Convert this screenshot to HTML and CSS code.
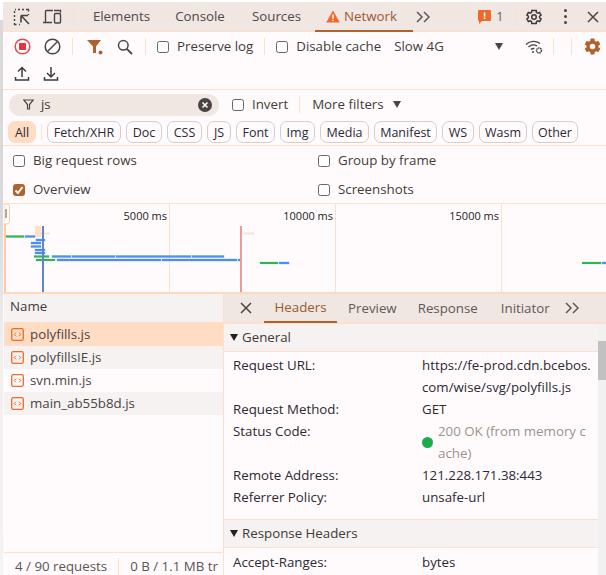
FILE: index.html
```html
<!DOCTYPE html>
<html lang="en">
<head>
<meta charset="utf-8">
<title>Network</title>
<link rel="stylesheet" href="styles.css">
</head>
<body>
<div class="edge"></div>
<div class="app">
  <header class="tabbar">
    <span class="ico first"><svg width="18" height="18" viewBox="0 0 18 18" fill="none" stroke="#4a4542" stroke-width="1.4"><path d="M2 1.500h1M5 1.500h2M9 1.500h2M13 1.500h2.500v2M15.500 6v1M1.500 3v2M1.500 7v2M1.500 11v2M1.500 15v1.500h2M6 16.500h1"/><path d="M8 7.500h7M8 7.500v7M8.500 8l7.500 8" stroke-width="1.600"/></svg></span>
    <span class="ico dev"><svg width="20" height="18" viewBox="0 0 20 18" fill="none" stroke="#4a4542" stroke-width="1.400"><path d="M11 2.500H4.500A1.200 1.200 0 0 0 3.500 3.500V14M1 14.500h9"/><rect x="12.500" y="5.500" width="6" height="9.500" rx="1"/><path d="M12 2.500h6.500v2"/></svg></span>
    <span class="sep s-tab"></span>
    <span class="tab t-el">Elements</span>
    <span class="tab t-co">Console</span>
    <span class="tab t-so">Sources</span>
    <span class="tab t-ne active"><svg width="14" height="13" viewBox="0 0 14 13"><path d="M7 .5 13.800 12.500H.2z" fill="#ee6a2a"/><path d="M6.300 4.500h1.400v4.300H6.300zM6.300 9.700h1.400v1.400H6.300z" fill="#fff"/></svg>Network</span>
    <span class="chev"><svg width="15" height="12" viewBox="0 0 15 12" fill="none" stroke="#5f5a57" stroke-width="1.500"><path d="M1 1l5 5-5 5M8 1l5 5-5 5"/></svg></span>
    <span class="issue"><svg width="13" height="14" viewBox="0 0 13 14"><path d="M1 0h11a1 1 0 0 1 1 1v9a1 1 0 0 1-1 1H4l-3 3V11a1 1 0 0 1-1-1V1a1 1 0 0 1 1-1z" fill="#ee6a2a"/><path d="M5.800 2.500h1.500v4.200H5.800zM5.800 7.600h1.500v1.500H5.800z" fill="#fff"/></svg><span>1</span></span>
    <span class="sep s-iss"></span>
    <span class="ico gear"><svg width="18" height="18" viewBox="0 0 24 24" fill="none" stroke="#3f3b39" stroke-width="2"><path d="M19.400 13a7.600 7.600 0 0 0 0-2l2-1.600-2-3.400-2.400 1a7.600 7.600 0 0 0-1.700-1L15 3.400h-6L8.600 6a7.600 7.600 0 0 0-1.700 1l-2.400-1-2 3.400 2 1.600a7.600 7.600 0 0 0 0 2l-2 1.600 2 3.400 2.400-1a7.600 7.600 0 0 0 1.700 1l.4 2.600h6l.4-2.600a7.600 7.600 0 0 0 1.700-1l2.400 1 2-3.400z"/><circle cx="12" cy="12" r="3"/></svg></span>
    <span class="dots"><i></i><i></i><i></i></span>
    <span class="ico close"><svg width="12" height="12" viewBox="0 0 12 12" fill="none" stroke="#4a4542" stroke-width="1.500"><path d="M1 1l10 10M11 1 1 11"/></svg></span>
  </header>

  <section class="toolbar">
    <div class="tool-row r1">
      <span class="ico rec"><svg width="17" height="17" viewBox="0 0 17 17"><circle cx="8.500" cy="8.500" r="7.300" fill="none" stroke="#e5484d" stroke-width="1.500"/><rect x="5" y="5" width="7" height="7" rx="1" fill="#e5343a"/></svg></span>
      <span class="ico clr"><svg width="17" height="17" viewBox="0 0 17 17" fill="none" stroke="#4a4542" stroke-width="1.500"><circle cx="8.500" cy="8.500" r="7.300"/><path d="M3.500 13.500l10-10"/></svg></span>
      <span class="sep s1"></span>
      <span class="ico fil"><svg width="16" height="16" viewBox="0 0 16 16"><path d="M0 1h14L9 7.500V14H6V7.500z" fill="#b0622c"/><circle cx="13.500" cy="13.500" r="2" fill="#b0622c"/></svg></span>
      <span class="ico sea"><svg width="16" height="16" viewBox="0 0 16 16" fill="none" stroke="#4a4542" stroke-width="1.500"><circle cx="6.300" cy="6.300" r="4.800"/><path d="M9.800 9.800l5.200 5.200" stroke-width="1.800"/></svg></span>
      <span class="sep s2"></span>
      <label class="check c-log"><span class="box"></span>Preserve log</label>
      <span class="sep s3"></span>
      <label class="check c-cache"><span class="box"></span>Disable cache</label>
      <span class="throttle">Slow 4G</span>
      <span class="caret c-thr"></span>
      <span class="ico wifi"><svg width="18" height="16" viewBox="0 0 18 16" fill="none" stroke="#4a4542" stroke-width="1.400"><path d="M1 5.500C5 1.500 11 1.500 15 4.500M3.500 8C6 5.700 9.500 5.500 12 6.800M6 10.500c1-.9 2.200-1.200 3.400-1"/><circle cx="8" cy="13" r="1" fill="#4a4542" stroke="none"/><circle cx="14" cy="11.500" r="2.500" stroke-width="1.500" stroke-dasharray="1.500 .6"/></svg></span>
      <span class="sep s4"></span>
      <span class="sep s5"></span>
      <span class="ico ogear"><svg width="19" height="19" viewBox="0 0 24 24"><path fill="#b0622c" d="M19.430 12.980c.04-.32.07-.64.07-.98s-.03-.66-.07-.98l2.110-1.650c.19-.15.240-.42.120-.640l-2-3.460c-.12-.22-.39-.3-.61-.22l-2.490 1c-.52-.4-1.080-.73-1.690-.98l-.38-2.650C14.460 2.180 14.250 2 14 2h-4c-.25 0-.46.180-.49.420l-.38 2.650c-.61.25-1.170.59-1.690.98l-2.490-1c-.23-.09-.49 0-.61.220l-2 3.460c-.13.220-.07.490.12.640l2.110 1.650c-.04.320-.07.650-.07.980s.03.660.07.980l-2.110 1.650c-.19.150-.24.420-.12.640l2 3.460c.12.220.39.300.61.220l2.490-1c.52.400 1.080.730 1.690.980l.38 2.650c.03.240.24.420.49.420h4c.25 0 .46-.18.49-.42l.38-2.650c.61-.25 1.170-.59 1.690-.98l2.490 1c.23.090.49 0 .61-.22l2-3.460c.12-.22.07-.49-.12-.64zM12 15.500a3.500 3.500 0 1 1 0-7 3.500 3.500 0 0 1 0 7z"/></svg></span>
    </div>
    <div class="tool-row r2">
      <span class="ico up"><svg width="16" height="16" viewBox="0 0 16 16" fill="none" stroke="#3f3b39" stroke-width="1.500"><path d="M8 11V2M4 5.500 8 1.500l4 4M1.500 11v3h13v-3"/></svg></span>
      <span class="ico down"><svg width="16" height="16" viewBox="0 0 16 16" fill="none" stroke="#3f3b39" stroke-width="1.500"><path d="M8 1v9.500M4 7l4 4 4-4M1.500 11v3h13v-3"/></svg></span>
    </div>
  </section>

  <section class="filters">
    <div class="pill">
      <svg width="11" height="11" viewBox="0 0 11 11" fill="none" stroke="#4a4542" stroke-width="1.200"><path d="M.7 1h9.600L6.500 5.500v4.500h-2V5.500z"/></svg>
      <span class="pill-text">js</span>
      <svg class="pill-x" width="14" height="14" viewBox="0 0 14 14"><circle cx="7" cy="7" r="7" fill="#4a4542"/><path d="M4.500 4.500l5 5M9.500 4.500l-5 5" stroke="#fff" stroke-width="1.600"/></svg>
    </div>
    <label class="check c-inv"><span class="box"></span>Invert</label>
    <span class="sep s6"></span>
    <span class="more">More filters</span>
    <span class="caret c-more"></span>
  </section>

  <nav class="chips">
    <span class="chip on">All</span>
    <span class="sep s7"></span>
    <span class="chip w74">Fetch/XHR</span>
    <span class="chip w36">Doc</span>
    <span class="chip w35">CSS</span>
    <span class="chip w24">JS</span>
    <span class="chip w38">Font</span>
    <span class="chip w35">Img</span>
    <span class="chip w49">Media</span>
    <span class="chip w63">Manifest</span>
    <span class="chip w32">WS</span>
    <span class="chip w48">Wasm</span>
    <span class="chip w46">Other</span>
  </nav>

  <section class="settings">
    <label class="check"><span class="box"></span>Big request rows</label>
    <label class="check"><span class="box"></span>Group by frame</label>
    <label class="check"><span class="box checked"><svg width="12" height="12" viewBox="0 0 12 12" fill="none" stroke="#fff" stroke-width="2"><path d="M2.500 6.500l2.500 2.500 4.500-6"/></svg></span>Overview</label>
    <label class="check"><span class="box"></span>Screenshots</label>
  </section>

  <section class="overview">
    <svg width="602" height="88" viewBox="4 204 602 88">
      <path d="M169.500 204v88M335.500 204v88M501.500 204v88" stroke="#fde0cc" fill="none"/>
      <rect x="4" y="204" width="2" height="88" fill="#ffc9a6"/>
      <path d="M4 204h3a2.500 2.500 0 0 1 2.500 2.500v15a2.500 2.500 0 0 1-2.500 2.500H4z" fill="#fff" stroke="#ffc9a6"/>
      <rect x="5.500" y="209" width="1" height="9" fill="#555"/>
      <g class="ms">
        <text x="167" y="219.500" text-anchor="end">5000 ms</text>
        <text x="333" y="219.500" text-anchor="end">10000 ms</text>
        <text x="499" y="219.500" text-anchor="end">15000 ms</text>
      </g>
      <rect x="35" y="226" width="6" height="11" fill="#ffdfcc"/>
      <rect x="41" y="232.500" width="9" height="2" fill="#f8e3d9"/>
      <rect x="243" y="232.500" width="11" height="2" fill="#f8e3d9"/>
      <g class="bars-g">
        <rect x="6" y="235.500" width="18" height="2"/>
        <rect x="34" y="255.500" width="15" height="2"/>
        <rect x="36" y="259" width="19" height="2"/>
        <rect x="260" y="262" width="18" height="2"/>
        <rect x="582" y="262" width="19" height="2"/>
      </g>
      <g class="bars-b">
        <rect x="25" y="235.500" width="10" height="2"/>
        <rect x="36" y="239" width="9" height="2"/>
        <rect x="31" y="242" width="10" height="2"/>
        <rect x="31" y="245.500" width="10" height="2"/>
        <rect x="35" y="249" width="10" height="2"/>
        <rect x="35" y="252" width="10" height="2"/>
        <rect x="52" y="255.500" width="19" height="2"/>
        <rect x="72" y="255.500" width="43" height="2"/>
        <rect x="116" y="255.500" width="75" height="2"/>
        <rect x="192" y="255.500" width="32" height="2"/>
        <rect x="57" y="259" width="104" height="2"/>
        <rect x="162" y="259" width="75" height="2"/>
        <rect x="238" y="259" width="3" height="2"/>
        <rect x="279" y="262" width="10" height="2"/>
        <rect x="602" y="262" width="4" height="2"/>
      </g>
      <rect x="42" y="226" width="2" height="66" fill="#5f86c8"/>
      <rect x="240" y="226" width="2" height="66" fill="#ef9a9a"/>
    </svg>
  </section>

  <main class="split">
    <aside class="list">
      <div class="list-head">Name</div>
      <div class="rows">
        <div class="row sel"><svg class="js" width="13" height="13" viewBox="0 0 13 13" fill="none" stroke="#ee6a2a"><rect x=".7" y=".7" width="11.600" height="11.600" rx="1.500" stroke-width="1.300"/><path d="M5 4.700 3.300 6.500 5 8.300M8 4.700l1.700 1.800L8 8.300"/></svg><span class="name">polyfills.js</span></div>
        <div class="row alt"><svg class="js" width="13" height="13" viewBox="0 0 13 13" fill="none" stroke="#ee6a2a"><rect x=".7" y=".7" width="11.600" height="11.600" rx="1.500" stroke-width="1.300"/><path d="M5 4.700 3.300 6.500 5 8.300M8 4.700l1.700 1.800L8 8.300"/></svg><span class="name">polyfillsIE.js</span></div>
        <div class="row"><svg class="js" width="13" height="13" viewBox="0 0 13 13" fill="none" stroke="#ee6a2a"><rect x=".7" y=".7" width="11.600" height="11.600" rx="1.500" stroke-width="1.300"/><path d="M5 4.700 3.300 6.500 5 8.300M8 4.700l1.700 1.800L8 8.300"/></svg><span class="name">svn.min.js</span></div>
        <div class="row alt"><svg class="js" width="13" height="13" viewBox="0 0 13 13" fill="none" stroke="#ee6a2a"><rect x=".7" y=".7" width="11.600" height="11.600" rx="1.500" stroke-width="1.300"/><path d="M5 4.700 3.300 6.500 5 8.300M8 4.700l1.700 1.800L8 8.300"/></svg><span class="name">main_ab55b8d.js</span></div>
      </div>
      <footer class="status"><span class="st-a">4 / 90 requests</span><span class="st-b">0 B / 1.1 MB tr</span></footer>
    </aside>
    <section class="detail">
      <div class="dtabs">
        <span class="dx"><svg width="12" height="12" viewBox="0 0 12 12" fill="none" stroke="#4a4542" stroke-width="1.500"><path d="M1 1l10 10M11 1 1 11"/></svg></span>
        <span class="dtab d-h active">Headers</span>
        <span class="dtab d-p">Preview</span>
        <span class="dtab d-r">Response</span>
        <span class="dtab d-i">Initiator</span>
        <svg class="dchev" width="15" height="12" viewBox="0 0 15 12" fill="none" stroke="#5f5a57" stroke-width="1.500"><path d="M1 1l5 5-5 5M8 1l5 5-5 5"/></svg>
      </div>
      <div class="dbody">
        <div class="dcontent">
          <div class="sect"><span class="tri"></span>General</div>
          <div class="kvs">
            <div class="kv"><span class="k">Request URL:</span><span class="v">https://fe-prod.cdn.bcebos.<br>com/wise/svg/polyfills.js</span></div>
            <div class="kv"><span class="k">Request Method:</span><span class="v">GET</span></div>
            <div class="kv"><span class="k">Status Code:</span><span class="v stat"><i class="dot"></i><span class="muted">200 OK (from memory c<br>ache)</span></span></div>
            <div class="kv"><span class="k">Remote Address:</span><span class="v">121.228.171.38:443</span></div>
            <div class="kv"><span class="k">Referrer Policy:</span><span class="v">unsafe-url</span></div>
          </div>
          <div class="sect"><span class="tri"></span>Response Headers</div>
          <div class="kvs tail">
            <div class="kv"><span class="k">Accept-Ranges:</span><span class="v">bytes</span></div>
          </div>
        </div>
        <div class="scroll"><div class="thumb"></div></div>
      </div>
    </section>
  </main>
</div>
</body>
</html>
```

FILE: styles.css
```css
* { box-sizing: border-box; }
html, body { margin: 0; padding: 0; }
body {
  width: 606px;
  height: 575px;
  overflow: hidden;
  background: #fff;
  display: flex;
  font-family: "Open Sans", "Noto Sans", sans-serif;
  font-size: 13.3px;
  line-height: 17px;
  color: #3f3b39;
}
.edge {
  width: 3px;
  flex: none;
  margin-top: 20px;
  background: linear-gradient(#d9d9d9 0, #d9d9d9 35%, #f0f0f0 60%, #f3f3f3 100%);
}
.app {
  width: 603px;
  height: 575px;
  padding-top: 2px;
  display: flex;
  flex-direction: column;
  overflow: hidden;
}
.app > * { background-color: #fffbfd; }
svg { display: block; flex: none; }
.ico { display: flex; align-items: center; justify-content: center; flex: none; }
.sep { width: 1px; height: 17px; background: #fde0cc; flex: none; }

/* top tabs */
.tabbar {
  height: 30px;
  flex: none;
  display: flex;
  align-items: center;
  background-color: #f0e6e2;
  border-bottom: 1px solid #fde0cc;
}
.first { margin-left: 10px; width: 18px; }
.dev { margin-left: 11px; width: 20px; }
.s-tab { margin-left: 11px; }
.tab {
  height: 30px;
  display: flex;
  align-items: center;
  justify-content: center;
  gap: 4px;
  color: #4f4a47;
  flex: none;
}
.t-el { width: 81px; margin-left: 7px; }
.t-co { width: 76px; margin-left: 0; }
.t-so { width: 73px; margin-left: 2px; }
.t-ne { width: 98px; margin-left: 2px; color: #9a5a30; border-bottom: 2px solid #b0622c; padding: 2px 5px 0 0; }
.chev { margin-left: 3px; flex: none; }
.issue { display: flex; align-items: center; gap: 5px; margin-left: 47px; width: 37px; color: #6b6663; flex: none; }
.s-iss { margin-left: 0; }
.gear { width: 18px; margin-left: 9px; }
.dots { display: flex; flex-direction: column; gap: 3px; margin-left: 21px; flex: none; }
.dots i { display: block; width: 3px; height: 3px; border-radius: 50%; background: #4a4542; }
.close { margin-left: 20px; }

/* toolbar */
.toolbar { flex: none; border-bottom: 1px solid #fde0cc; }
.tool-row { display: flex; align-items: center; }
.r1 { height: 29px; }
.r2 { height: 28px; padding-bottom: 2px; }
.rec { margin-left: 11px; width: 17px; }
.clr { margin-left: 13px; width: 17px; }
.s1 { margin-left: 11px; }
.fil { margin-left: 14px; width: 16px; }
.sea { margin-left: 14px; width: 16px; }
.s2 { margin-left: 12px; }
.check { display: flex; align-items: center; gap: 8px; white-space: nowrap; flex: none; }
.box {
  width: 12px;
  height: 12px;
  border: 1px solid #6b6663;
  border-radius: 2.500px;
  background: #fff;
  flex: none;
  display: block;
}
.box.checked { background: #b0622c; border-color: #b0622c; }
.box.checked svg { margin: -1px; }
.c-log { margin-left: 11px; }
.s3 { margin-left: 11px; }
.c-cache { margin-left: 11px; }
.throttle { margin-left: 13px; flex: none; width: 101px; }
.caret {
  width: 0;
  height: 0;
  border-left: 4.500px solid transparent;
  border-right: 4.500px solid transparent;
  border-top: 7px solid #4a4542;
  flex: none;
}
.wifi { margin-left: 22px; width: 18px; }
.s4 { margin-left: 10px; }
.s5 { margin-left: 17px; }
.ogear { margin-left: 11px; }
.up { margin-left: 11px; width: 16px; }
.down { margin-left: 13px; width: 16px; }

/* filter row */
.filters { height: 29px; flex: none; display: flex; align-items: center; }
.pill {
  margin-left: 6px;
  width: 210px;
  height: 22px;
  border-radius: 11px;
  background: #f0e6e2;
  display: flex;
  align-items: center;
  padding-left: 14px;
  flex: none;
}
.pill-text { margin-left: 7px; }
.pill-x { margin-left: auto; margin-right: 7px; }
.c-inv { margin-left: 13px; }
.s6 { margin-left: 11px; }
.more { margin-left: 12px; flex: none; }
.c-more { margin-left: 9px; }

/* chips */
.chips {
  height: 27px;
  flex: none;
  display: flex;
  align-items: center;
  gap: 5px;
  padding-left: 5px;
  border-bottom: 1px solid #fde0cc;
  font-size: 12.500px;
  line-height: normal;
  color: #2b2a33;
}
.chip {
  height: 22px;
  border: 1px solid #d7cdc9;
  border-radius: 7px;
  display: flex;
  align-items: center;
  justify-content: center;
  background: #fffbfd;
  flex: none;
}
.chip.on { width: 28px; background: #ffdcc4; border-color: #ffdcc4; }
.s7 { height: 16px; }
.w74 { width: 74px; }
.w36 { width: 36px; }
.w35 { width: 35px; }
.w24 { width: 24px; }
.w38 { width: 39px; }
.w49 { width: 49px; }
.w63 { width: 63px; }
.w32 { width: 32px; }
.w48 { width: 48px; }
.w46 { width: 46px; }

/* settings */
.settings {
  height: 58px;
  flex: none;
  display: grid;
  grid-template-columns: 305px 1fr;
  grid-template-rows: 29px 29px;
  align-items: center;
  padding-left: 10px;
  border-bottom: 1px solid #fde0cc;
}

/* overview */
.overview { height: 88px; flex: none; padding-left: 1px; overflow: hidden; }
.ms text { font-family: "Open Sans", sans-serif; font-size: 11px; fill: #222; }
.bars-g rect { fill: #2fb457; stroke: #2fb457; stroke-opacity: .2; }
.bars-b rect { fill: #4d8ef0; stroke: #4d8ef0; stroke-opacity: .3; }

/* split */
.split { flex: 1; min-height: 0; display: flex; border-top: 2px solid #fdd9c0; }
.list { width: 221px; flex: none; display: flex; flex-direction: column; padding-left: 1px; border-right: 1px solid #fde0cc; }
.list-head { height: 28px; flex: none; display: flex; align-items: center; padding: 0 0 4px 6px; color: #3f3b39; background: #f5f2f1; }
.rows { flex: 1; }
.row { height: 23px; display: flex; align-items: center; gap: 6px; padding-left: 7px; color: #4a4542; }
.row.sel { height: 24px; background: #ffdcc4; }
.row.alt { background: #f5f2f1; }
.js { flex: none; }
.status { height: 23px; flex: none; display: flex; align-items: center; padding-top: 4px; border-top: 1px solid #fde0cc; white-space: nowrap; overflow: hidden; color: #5a5552; }
.st-a { padding-left: 11px; padding-right: 11px; border-right: 1px solid #fde0cc; }
.st-b { padding-left: 11px; }

/* detail */
.detail { flex: 1; min-width: 0; display: flex; flex-direction: column; }
.dtabs {
  height: 30px;
  flex: none;
  display: flex;
  align-items: center;
  background: #f0e6e2;
  border-bottom: 2px solid #fde0cc;
  color: #5f5a57;
}
.dx { margin-left: 16px; flex: none; }
.dtab { height: 30px; display: flex; align-items: center; flex: none; }
.d-h { margin-left: 12px; width: 73px; justify-content: center; color: #9a5a30; border-bottom: 2px solid #b0622c; }
.d-p { margin-left: 11px; }
.d-r { margin-left: 21px; }
.d-i { margin-left: 23px; }
.dchev { margin-left: 15px; }
.dbody { flex: 1; min-height: 0; display: flex; overflow: hidden; }
.dcontent { flex: 1; min-width: 0; color: #2b2a33; }
.sect {
  height: 28px;
  display: flex;
  align-items: center;
  gap: 4px;
  padding-left: 6px;
  background: #f5f2f1;
  border-bottom: 1px solid #fde0cc;
  color: #3f3b39;
}
.tri {
  width: 0;
  height: 0;
  border-left: 4px solid transparent;
  border-right: 4px solid transparent;
  border-top: 7px solid #222;
}
.kvs { padding: 2px 0 11px; border-bottom: 1px solid #fde0cc; }
.kvs.tail { padding-top: 3px; }
.kv { display: flex; line-height: 22px; padding-left: 9px; }
.k { width: 189px; flex: none; }
.v { white-space: nowrap; }
.stat { display: flex; align-items: center; gap: 5px; }
.dot { width: 11px; height: 11px; border-radius: 50%; background: #1faa4b; flex: none; }
.muted { color: #9c918c; }
.scroll { width: 8px; flex: none; background: #f1f1f1; padding-top: 17px; }
.thumb { height: 39px; background: #c1c1c1; }
```
